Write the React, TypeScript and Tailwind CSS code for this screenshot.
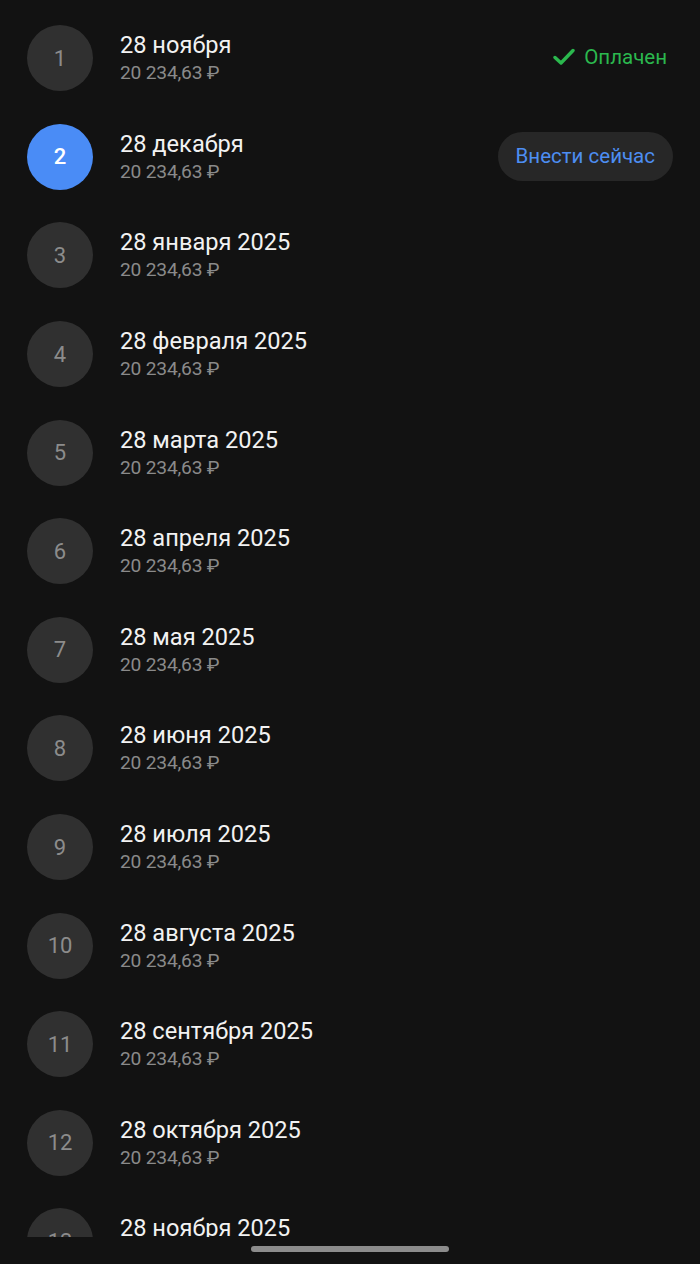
import React from 'react';

const months = [
    '28 ноября',
    '28 декабря',
    '28 января 2025',
    '28 февраля 2025',
    '28 марта 2025',
    '28 апреля 2025',
    '28 мая 2025',
    '28 июня 2025',
    '28 июля 2025',
    '28 августа 2025',
    '28 сентября 2025',
    '28 октября 2025',
    '28 ноября 2025',
];

const Row: React.FC<{ idx: number; title: string }> = ({ idx, title }) => {
    const current = idx === 1;
    return (
        <div className="h-[98.6px] flex items-center pl-[27px] pr-[27px] shrink-0">
            <div
                className={
                    current
                        ? 'w-[66px] h-[66px] rounded-full bg-[#4a8cf6] flex items-center justify-center text-white text-[22px] font-medium'
                        : 'w-[66px] h-[66px] rounded-full bg-[#303030] flex items-center justify-center text-[#8c8c8c] text-[22px]'
                }
            >
                {idx + 1}
            </div>
            <div className="ml-[27px] flex-1 flex flex-col">
                <span className="text-[23.6px] leading-[28px] text-[#f2f2f2]">{title}</span>
                <span className="mt-[2px] text-[19.2px] leading-[24px] text-[#8a8a8a] tracking-[-0.2px]">20 234,63 ₽</span>
            </div>
            {idx === 0 && (
                <div className="flex items-center gap-[9px] self-start mt-[33px] mr-[6px]">
                    <svg width="22" height="18" viewBox="0 0 22 18" fill="none">
                        <path d="M2 9.5 L8 15 L20 2.5" stroke="#2bb84e" strokeWidth="3.4" strokeLinecap="round" strokeLinejoin="round" />
                    </svg>
                    <span className="text-[20.5px] text-[#2bb84e]">Оплачен</span>
                </div>
            )}
            {current && (
                <div className="self-start mt-[24px] h-[49px] px-[18px] rounded-full bg-[#272727] flex items-center">
                    <span className="text-[20.5px] text-[#4d8ef2]">Внести сейчас</span>
                </div>
            )}
        </div>
    );
};

export default function App() {
    return (
        <div className="w-[700px] h-[1264px] bg-[#121212] flex flex-col" style={{ fontFamily: 'Roboto, "Noto Sans", sans-serif' }}>
            <div className="h-[1237px] overflow-hidden flex flex-col pt-[9px]">
                {months.map((m, i) => (
                    <Row key={i} idx={i} title={m} />
                ))}
            </div>
            <div className="flex-1 flex justify-center pt-[9px]">
                <div className="w-[198px] h-[6px] rounded-full bg-[#8c8c8c]" />
            </div>
        </div>
    );
}
